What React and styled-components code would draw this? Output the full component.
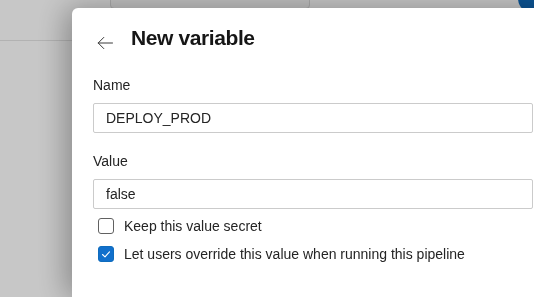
import React from "react"
import styled, { createGlobalStyle } from "styled-components"

const GlobalStyle = createGlobalStyle`
  html, body {
    margin: 0;
    overflow: hidden;
    font-family: "Liberation Sans", Arial, sans-serif;
    color: #242424;
  }
`

const Page = styled.div`
  width: 100vw;
  height: 100vh;
  background: #ffffff;
`

const TopBar = styled.header`
  display: flex;
  align-items: flex-start;
  height: 40px;
  padding-left: 110px;
  border-bottom: 1px solid #e4e4e4;
  overflow: hidden;
`

const SearchBox = styled.div`
  width: 198px;
  height: 30px;
  margin-top: -23px;
  border: 1px solid #dadada;
  border-radius: 4px;
  background: #f7f7f7;
`

const Avatar = styled.div`
  width: 32px;
  height: 32px;
  margin: -18px -16px 0 auto;
  border-radius: 50%;
  background: #0f6cbd;
`

const Scrim = styled.div`
  position: fixed;
  inset: 0;
  background: rgba(0, 0, 0, 0.22);
`

const Panel = styled.aside`
  position: fixed;
  left: 72px;
  top: 8px;
  bottom: 0;
  width: 440px;
  padding: 16px 21px;
  background: #ffffff;
  border-top-left-radius: 6px;
  box-shadow: -6px 0 30px rgba(0, 0, 0, 0.32);
`

const HeaderRow = styled.div`
  display: flex;
  align-items: flex-start;
  gap: 14px;
  height: 28px;
`

const BackButton = styled.button`
  display: flex;
  justify-content: center;
  width: 24px;
  height: 28px;
  margin: 0;
  padding: 11px 0 0;
  border: 0;
  background: none;
  color: #3a3a3a;
`

const Title = styled.h1`
  margin: 0;
  font-size: 21px;
  line-height: 27px;
  font-weight: 700;
  letter-spacing: -0.4px;
  color: #161616;
`

const Form = styled.div`
  display: flex;
  flex-direction: column;
  gap: 18px;
  margin-top: 23px;
`

const Field = styled.label`
  display: flex;
  flex-direction: column;
  gap: 8px;
`

const Label = styled.span`
  font-size: 14px;
  line-height: 20px;
  color: #242424;
`

const Input = styled.input`
  box-sizing: border-box;
  width: 100%;
  height: 30px;
  margin: 0;
  padding: 0 12px;
  border: 1px solid #cbcbcb;
  border-radius: 2px;
  font-family: inherit;
  font-size: 14px;
  color: #242424;
  outline: none;
`

const Checks = styled.div`
  display: flex;
  flex-direction: column;
  gap: 4px;
  margin-top: -13px;
`

const CheckRow = styled.div`
  display: flex;
  align-items: center;
  gap: 10px;
  height: 24px;
  padding-left: 5px;
  font-size: 14px;
  color: #242424;
`

const Box = styled.span`
  box-sizing: border-box;
  display: flex;
  width: 16px;
  height: 16px;
  border-radius: 3px;
  border: 1px solid ${(p) => (p.checked ? "#0f6cbd" : "#616161")};
  background: ${(p) => (p.checked ? "#1170cc" : "#ffffff")};
`

const Checkbox = ({ checked, children }) => (
  <CheckRow>
    <Box checked={checked}>
      {checked && (
        <svg width="14" height="14" viewBox="0 0 14 14" fill="none">
          <path d="M3.5 7.5 L6 9.8 L10.5 4.8" stroke="#fff" strokeWidth="1.1" strokeLinecap="round" strokeLinejoin="round" />
        </svg>
      )}
    </Box>
    <span>{children}</span>
  </CheckRow>
)

export default function App() {
  return (
    <Page>
      <GlobalStyle />
      <TopBar>
        <SearchBox />
        <Avatar />
      </TopBar>
      <Scrim />
      <Panel>
        <HeaderRow>
          <BackButton aria-label="Back">
            <svg width="16" height="16" viewBox="0 0 16 16" fill="none">
              <path d="M15.5 8 H1.2 M6.8 2.4 L1.2 8 L6.8 13.6" stroke="currentColor" strokeWidth="1" strokeLinecap="round" strokeLinejoin="round" />
            </svg>
          </BackButton>
          <Title>New variable</Title>
        </HeaderRow>
        <Form>
          <Field>
            <Label>Name</Label>
            <Input defaultValue="DEPLOY_PROD" />
          </Field>
          <Field>
            <Label>Value</Label>
            <Input defaultValue="false" />
          </Field>
          <Checks>
            <Checkbox>Keep this value secret</Checkbox>
            <Checkbox checked>Let users override this value when running this pipeline</Checkbox>
          </Checks>
        </Form>
      </Panel>
    </Page>
  )
}
